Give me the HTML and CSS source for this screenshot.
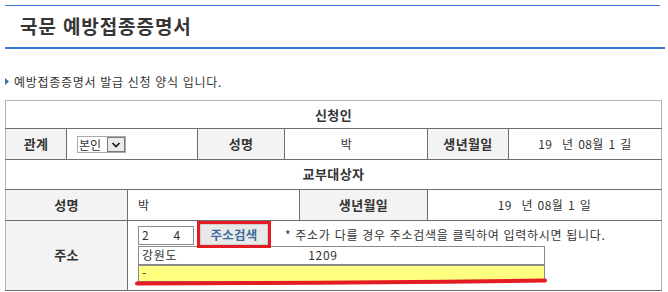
FILE: index.html
```html
<!DOCTYPE html>
<html lang="ko">
<head>
    <meta charset="UTF-8">
    <meta name="viewport" content="width=device-width, initial-scale=1.0">
    <title>국문 예방접종증명서</title>
    <link rel="stylesheet" href="styles.css">
</head>
<body>
    <div class="page">
        <div class="title-bar">
            <h2 class="title">국문 예방접종증명서</h2>
        </div>

        <p class="intro">
            <svg class="bullet" width="4" height="7" viewBox="0 0 4 7"><polygon points="0,0 4,3.5 0,7" fill="#3d6fb8"/></svg>
            예방접종증명서 발급 신청 양식 입니다.
        </p>

        <!-- 신청인 -->
        <table class="form-table applicant">
            <colgroup>
                <col class="w61"><col class="w131"><col class="w87"><col class="w143"><col class="w81"><col class="w153">
            </colgroup>
            <tr class="row-group">
                <th colspan="6" class="group">신청인</th>
            </tr>
            <tr class="row-data">
                <th>관계</th>
                <td class="pad-left">
                    <span class="select">
                        <span class="select-text">본인</span>
                        <span class="select-btn">
                            <svg width="10" height="8" viewBox="0 0 10 8"><path d="M1.5 2 L5 5.5 L8.5 2" fill="none" stroke="#111" stroke-width="1.6"/></svg>
                        </span>
                    </span>
                </td>
                <th>성명</th>
                <td class="name-cell">박</td>
                <th>생년월일</th>
                <td class="date">19  년 08월 1 길</td>
            </tr>
        </table>

        <!-- 교부대상자 -->
        <table class="form-table target">
            <colgroup>
                <col class="w122"><col class="w172"><col class="w128"><col class="w234">
            </colgroup>
            <tr class="row-group">
                <th colspan="4" class="group">교부대상자</th>
            </tr>
            <tr class="row-data">
                <th>성명</th>
                <td class="pad-left">박</td>
                <th>생년월일</th>
                <td class="date">19  년 08월 1 일</td>
            </tr>
            <tr class="row-address">
                <th>주소</th>
                <td colspan="3" class="addr-cell">
                    <div class="addr-box">
                        <div class="addr-line">
                            <div class="field zip"><span>2</span><span class="zip-rest">4</span></div>
                            <button type="button" class="search-btn">주소검색</button>
                            <span class="addr-note">* 주소가 다를 경우 주소검색을 클릭하여 입력하시면 됩니다.</span>
                        </div>
                        <div class="field addr1"><span>강원도</span><span class="addr1-rest">1209</span></div>
                        <div class="field addr2">-</div>
                        <svg class="underline" width="414" height="10" viewBox="0 0 414 10"><path d="M2 7.5 Q 200 7 410 4.5" fill="none" stroke="#e31b23" stroke-width="4" stroke-linecap="round"/></svg>
                    </div>
                </td>
            </tr>
        </table>
    </div>
</body>
</html>
```

FILE: styles.css
```css
body {
    margin: 0;
    font-family: "Noto Sans CJK KR", "Noto Sans", sans-serif;
    font-size: 12px;
    letter-spacing: 0.7px;
    color: #333;
    background-color: #fff;
}

.page {
    padding: 5px 0 0 5px;
}

.title-bar {
    width: 660px;
    border-bottom: 2px solid #3a74d2;
}

.title {
    margin: 0;
    width: 655px;
    height: 42px;
    line-height: 39px;
    box-sizing: border-box;
    padding-left: 15px;
    border-top: 1px solid #3a74d2;
    font-size: 19px;
    font-weight: bold;
    letter-spacing: 0.9px;
    color: #363636;
}

.intro {
    margin: 24px 0 10px 0;
    height: 17px;
    line-height: 16px;
    display: flex;
    align-items: center;
    gap: 5px;
}

.bullet {
    display: block;
}

.form-table {
    border-collapse: collapse;
    table-layout: fixed;
    width: 656px;
    border: 1px solid #b4b4b4;
}

.form-table.target {
    border-top: none;
}

.form-table th,
.form-table td {
    border: 1px solid #6e6e6e;
    padding: 0;
    font-size: 12px;
    line-height: 16px;
}

.form-table tr > :first-child {
    border-left: none;
}

.form-table tr > :last-child {
    border-right: none;
}

.form-table .row-group th {
    border-top: none;
}

.form-table th {
    background-color: #f3f3f3;
    font-size: 13px;
    font-weight: bold;
    letter-spacing: 0.4px;
    color: #333;
}

.form-table th.group {
    background-color: #fff;
}

.applicant .row-group { height: 28px; }
.applicant .row-data { height: 31px; }
.target .row-group { height: 29px; }
.target .row-data { height: 31px; }
.target .row-address { height: 70px; }

.w61 { width: 61px; }
.w81 { width: 81px; }
.w87 { width: 87px; }
.w122 { width: 122px; }
.w128 { width: 128px; }
.w131 { width: 131px; }
.w143 { width: 143px; }
.w153 { width: 153px; }
.w172 { width: 172px; }
.w234 { width: 234px; }

.pad-left {
    padding-left: 10px !important;
}

.name-cell {
    text-align: center;
    padding-right: 19px !important;
}

.date {
    text-align: center;
    white-space: pre;
    word-spacing: 1px;
    letter-spacing: 0.4px;
}

.select {
    display: inline-flex;
    align-items: center;
    vertical-align: middle;
    height: 17px;
    width: 49px;
    box-sizing: border-box;
    border: 1px solid #a9a9a9;
    background-color: #fff;
}

.select-text {
    padding-left: 1px;
    width: 28px;
    line-height: 15px;
    letter-spacing: 0;
    color: #333;
}

.select-btn {
    display: flex;
    align-items: center;
    justify-content: center;
    width: 18px;
    height: 15px;
    box-sizing: border-box;
    border: 1px solid #7a7a7a;
    background-color: #eaeaea;
}

.addr-cell {
    vertical-align: top;
    padding: 0 0 0 10px !important;
}

.addr-box {
    position: relative;
    padding-top: 1px;
}

.addr-line {
    display: flex;
    align-items: flex-end;
    height: 23px;
}

.field {
    box-sizing: border-box;
    border: 1px solid #8a8a8a;
    background-color: #fff;
    padding-left: 3px;
    line-height: 16px;
    display: flex;
    align-items: center;
    color: #333;
}

.zip {
    width: 56px;
    height: 19px;
}

.zip-rest {
    margin-left: 24px;
}

.search-btn {
    margin-left: 6px;
    width: 68px;
    height: 21px;
    padding: 0;
    border: 1px solid #cfcfcf;
    background-color: #e9e9e9;
    color: #3b6c9d;
    font-family: inherit;
    font-size: 12.5px;
    font-weight: bold;
    letter-spacing: 0.3px;
    line-height: 17px;
    outline: 3px solid #e31b23;
}

.addr-note {
    margin-left: 17px;
    margin-bottom: 2px;
    line-height: 16px;
}

.addr1 {
    width: 407px;
    height: 19px;
    margin-top: 1px;
}

.addr1-rest {
    margin-left: 131px;
}

.addr2 {
    width: 407px;
    height: 17px;
    background-color: #ffff80;
}

.underline {
    position: absolute;
    left: -3px;
    top: 55px;
    overflow: visible;
}
```
